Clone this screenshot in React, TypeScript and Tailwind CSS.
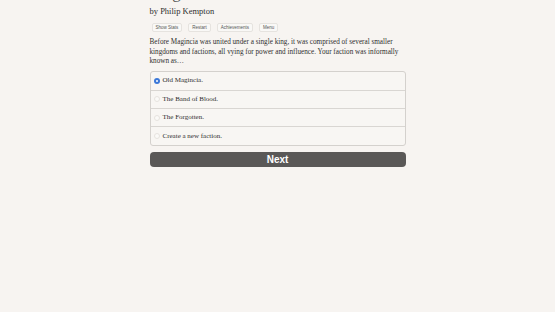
import { useState } from "react";

const options = [
  "Old Magincia.",
  "The Band of Blood.",
  "The Forgotten.",
  "Create a new faction.",
];

const menuButtons = ["Show Stats", "Restart", "Achievements", "Menu"];

export default function App() {
  const [selected, setSelected] = useState(0);

  return (
    <div
      className="min-h-[312px] w-full overflow-hidden bg-[#f7f4f1] text-[#2f2f2f]"
      style={{ fontFamily: '"Liberation Serif", "DejaVu Serif", serif' }}
    >
      <div className="mx-auto w-[256px]">
        <h1 className="-mt-[17px] h-[20px] text-[17px] leading-[20px] text-[#555]">
          Magincia
        </h1>
        <div className="mt-[3px] text-[8.5px] leading-[10px]">by Philip Kempton</div>

        <div className="mt-[7px] flex gap-[6px] pl-[2px]">
          {menuButtons.map((label) => (
            <button
              key={label}
              className="h-[9px] rounded-[2px] border border-[#e6e3df] bg-[#f9f8f6] px-[3px] text-[4.5px] leading-[7px] text-[#555]"
              style={{ fontFamily: '"Liberation Sans", Arial, sans-serif' }}
            >
              {label}
            </button>
          ))}
        </div>

        <p className="mt-[6px] text-[7.2px] leading-[9.5px]">
          Before Magincia was united under a single king, it was comprised of several smaller
          kingdoms and factions, all vying for power and influence. Your faction was informally
          known as…
        </p>

        <div className="mt-[4px] overflow-hidden rounded-[3px] border border-[#d4d1cd] bg-[#f8f6f3]">
          {options.map((opt, i) => (
            <label
              key={opt}
              onClick={() => setSelected(i)}
              className={`flex h-[18.3px] cursor-pointer items-center gap-[3px] pl-[3px] text-[7px] ${
                i > 0 ? "border-t border-[#d9d6d2]" : ""
              }`}
            >
              <span
                className={`flex h-[6px] w-[6px] items-center justify-center rounded-full ${
                  selected === i
                    ? "bg-[#3b78d8]"
                    : "border border-[#e6e3df] bg-[#fbfaf8]"
                }`}
              >
                {selected === i && <span className="h-[2px] w-[2px] rounded-full bg-white" />}
              </span>
              {opt}
            </label>
          ))}
        </div>

        <button
          className="mt-[6px] h-[15px] w-full rounded-[4px] bg-[#5a5857] text-[10px] font-bold leading-[15px] text-white"
          style={{ fontFamily: '"Liberation Sans", Arial, sans-serif' }}
        >
          Next
        </button>
      </div>
    </div>
  );
}
